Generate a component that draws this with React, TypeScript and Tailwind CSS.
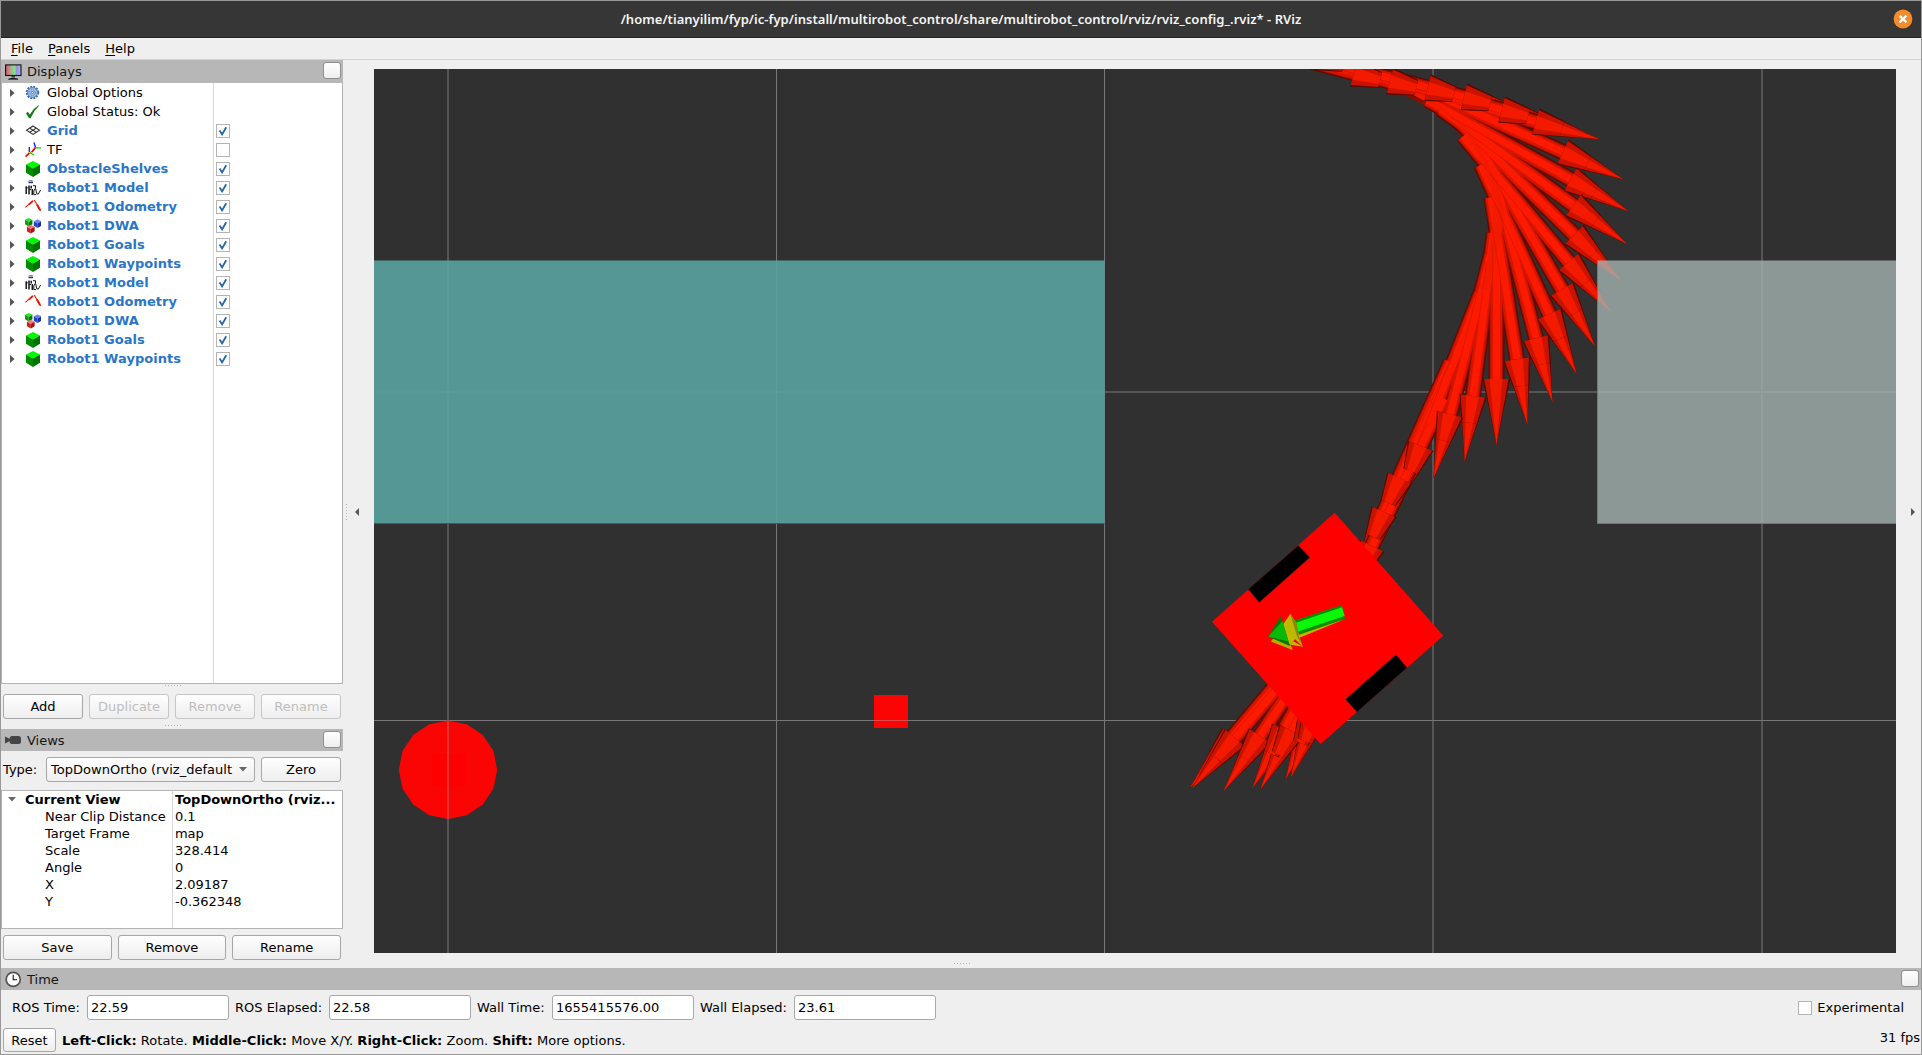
import React from "react";

type IconName = "gear" | "ok" | "grid" | "tf" | "cube" | "robot" | "odom" | "cubes";

const displays: { icon: IconName; label: string; bold?: boolean; checked?: boolean }[] = [
  { icon: "gear", label: "Global Options" },
  { icon: "ok", label: "Global Status: Ok" },
  { icon: "grid", label: "Grid", bold: true, checked: true },
  { icon: "tf", label: "TF", checked: false },
  { icon: "cube", label: "ObstacleShelves", bold: true, checked: true },
  { icon: "robot", label: "Robot1 Model", bold: true, checked: true },
  { icon: "odom", label: "Robot1 Odometry", bold: true, checked: true },
  { icon: "cubes", label: "Robot1 DWA", bold: true, checked: true },
  { icon: "cube", label: "Robot1 Goals", bold: true, checked: true },
  { icon: "cube", label: "Robot1 Waypoints", bold: true, checked: true },
  { icon: "robot", label: "Robot1 Model", bold: true, checked: true },
  { icon: "odom", label: "Robot1 Odometry", bold: true, checked: true },
  { icon: "cubes", label: "Robot1 DWA", bold: true, checked: true },
  { icon: "cube", label: "Robot1 Goals", bold: true, checked: true },
  { icon: "cube", label: "Robot1 Waypoints", bold: true, checked: true },
];

const viewProps: [string, string][] = [
  ["Near Clip Distance", "0.1"],
  ["Target Frame", "map"],
  ["Scale", "328.414"],
  ["Angle", "0"],
  ["X", "2.09187"],
  ["Y", "-0.362348"],
];

function Cube({ x, y, s, top, left, right }: { x: number; y: number; s: number; top: string; left: string; right: string }) {
  return (
    <g transform={`translate(${x} ${y}) scale(${s})`}>
      <path d="M7 0 14 3.5 7 7.5 0 3.5Z" fill={top} />
      <path d="M0 3.5 7 7.5V16L0 11.8Z" fill={left} />
      <path d="M14 3.5 7 7.5V16l7-4.2Z" fill={right} />
    </g>
  );
}

function RowIcon({ name }: { name: IconName }) {
  return (
    <svg width="16" height="16" viewBox="0 0 16 16" className="shrink-0">
      {name === "gear" && (
        <g fill="none" stroke="#3d6fb0">
          <circle cx="7.5" cy="7.5" r="5.8" strokeWidth="1.9" strokeDasharray="2 1.04" />
          <circle cx="7.5" cy="7.5" r="4.9" fill="#a9c6ea" strokeWidth="0.9" />
          <circle cx="7.5" cy="7.5" r="2.8" strokeWidth="0.9" strokeDasharray="1.4 0.8" />
          <circle cx="7.5" cy="7.5" r="1" fill="#eef4fb" strokeWidth="0.8" />
        </g>
      )}
      {name === "ok" && <path d="M1 9.2 2.8 7.8 4.8 10.4Q8 4.5 13.4 1.2L14 1.8Q8.5 7 5.6 14.2H4Z" fill="#1c7a1c" />}
      {name === "grid" && (
        <g fill="none" stroke="#333" strokeWidth="1.1">
          <path d="M8 3 14.5 7.2 8 11.4 1.5 7.2Z" />
          <path d="M4.8 5.1 11.2 9.3M11.2 5.1 4.8 9.3" />
        </g>
      )}
      {name === "tf" && (
        <g fill="none" strokeWidth="1.3">
          <path d="M10 6.5 5 11" stroke="#f08000" />
          <path d="M4.3 10V5M10.5 5.5 9 0.5" stroke="#1414f0" />
          <path d="M4.5 10.8 0.5 14.6M10.5 5.5 7 10" stroke="#f00000" strokeWidth="1.7" />
          <path d="M5 10.8 9 13M10.5 5.8H16" stroke="#00e000" />
        </g>
      )}
      {name === "cube" && <Cube x={1} y={0} s={1} top="#00fb00" left="#008a00" right="#007200" />}
      {name === "cubes" && (
        <g>
          <Cube x={0} y={0} s={0.53} top="#22e822" left="#0c9c0c" right="#087808" />
          <Cube x={8.8} y={1.4} s={0.54} top="#6a86f0" left="#2440c8" right="#16309c" />
          <Cube x={1.9} y={6.8} s={0.55} top="#f07878" left="#cc1e1e" right="#a81010" />
        </g>
      )}
      {name === "robot" && (
        <g fill="none" stroke="#161616">
          <path d="M3.5 1 4.5 0.5H7L7.8 1" strokeWidth="0.8" stroke="#666" />
          <path d="M3.5 2.4H8" stroke="#22307c" strokeWidth="1.6" />
          <path d="M1.2 6.2V14M0.5 7.8H2.6M4 5.5V14.6M6.2 5.8V8.6M7.3 9V15" strokeWidth="1.5" />
          <path d="M4 9.6H6M8 5.7H10.5V8L8.8 11V14.6H11.2M10.8 9 11.6 13.5 13.2 14.2 15.6 10" strokeWidth="1" />
        </g>
      )}
      {name === "odom" && (
        <g fill="none" stroke="#e51a00">
          <path d="M0.3 8.4 7.8 2" strokeWidth="1.1" />
          <path d="M4 5.4 8 1.8" strokeWidth="1.8" />
          <path d="M9.3 1 15.6 12" strokeWidth="1.1" />
          <path d="M12 5.6 15 11" strokeWidth="2" />
        </g>
      )}
    </svg>
  );
}

function CheckBox({ checked }: { checked?: boolean }) {
  return (
    <span className="flex h-[14px] w-[14px] shrink-0 items-center justify-center border border-[#b4b4b4] bg-white">
      {checked && (
        <svg width="10" height="10" viewBox="0 0 10 10">
          <path d="M1.6 4.6 4.1 8.4 8.2 1.2" fill="none" stroke="#2465a8" strokeWidth="1.8" />
        </svg>
      )}
    </span>
  );
}

function Button({ children, className = "", disabled }: { children: React.ReactNode; className?: string; disabled?: boolean }) {
  return (
    <div
      className={`flex h-[25px] items-center justify-center rounded-[3px] border bg-gradient-to-b from-[#fefefe] to-[#eeeeee] ${
        disabled ? "border-[#c6c6c6] text-[#bebebe]" : "border-[#a6a6a6] text-black"
      } ${className}`}
    >
      {children}
    </div>
  );
}

function PanelHeader({ icon, title, className = "", top = "mt-[2px]" }: { icon: React.ReactNode; title: string; className?: string; top?: string }) {
  return (
    <div className={`flex shrink-0 justify-between bg-[#b7b7b7] pl-[4px] pr-[2px] text-[#141414] ${className}`}>
      <div className="flex items-center gap-[5px]">
        {icon}
        <span>{title}</span>
      </div>
      <div className={`h-[17px] w-[18px] rounded-[3px] border border-[#8f8f8f] bg-gradient-to-b from-white to-[#eeeeee] ${top}`} />
    </div>
  );
}

function Dots() {
  return <div className="h-[1px] w-[17px] bg-[repeating-linear-gradient(90deg,#b4b4b4_0_1px,transparent_1px_3px)]" />;
}

/* ---------- 3D scene ---------- */

type Pose = [number, number, number];

// Head-base centre and heading in degrees; the shaft runs 164 units back from it.
const odometry: Pose[] = [
  [1318, 57, 15],
  [1354, 73, 15],
  [1390, 81, 14.5],
  [1427.7, 87.7, 14],
  [1464, 97, 14],
  [1501.7, 109.7, 14.5],
  [1535.8, 121.7, 15.4],
  [1563, 152, 24.3],
  [1570.7, 179.3, 29],
  [1573.7, 205.3, 36],
  [1574.3, 234.7, 44.5],
  [1568.8, 261.7, 50],
  [1562, 289.3, 60],
  [1549.3, 314, 65.5],
  [1536, 338.2, 75.5],
  [1517, 359.3, 81],
  [1496.5, 379, 90],
  [1473, 396, 97.3],
  [1450, 414.3, 104.4],
  [1420.7, 446, 111.4],
  [1399.7, 478.3, 115],
  [1384, 512, 114],
  [1372, 546, 116],
  [1232.5, 737, 130],
  [1235, 738, 130.5],
  [1260, 736, 123.5],
  [1284, 730, 118.5],
  [1291.5, 731, 118],
  [1311, 718, 112.5],
  [1315, 716, 111.5],
];

function place([x, y, a]: Pose) {
  return `translate(${x} ${y}) rotate(${a})`;
}

// Facets sorted from the cylinder's flank up to its crest.
const facets = [
  { y: -8, h: 16, fill: "#5c0900" },
  { y: -6.8, h: 13.8, fill: "#9a0f00" },
  { y: -5.6, h: 11.6, fill: "#d41600" },
  { y: -3.6, h: 7.6, fill: "#fd1a00" },
];

function HeadFull() {
  return (
    <g>
      <path d="M0-13.6 66 0 0 13.6Z" fill="#5a0800" />
      <path d="M0-12 66 0 0 12.4Z" fill="#c81300" />
      <path d="M0-6 66 0 0 7Z" fill="#f41a00" />
    </g>
  );
}

function HeadBase() {
  return (
    <g>
      <path d="M0-13.6 27-8V8L0 13.6Z" fill="#5a0800" />
      <path d="M0-12 27-7.1V7.3L0 12.4Z" fill="#c81300" />
      <path d="M0-6 27-3.5V4.1L0 7Z" fill="#f41a00" />
    </g>
  );
}

function Scene() {
  const circle = Array.from({ length: 16 }, (_, i) => {
    const t = (i * Math.PI) / 8;
    return `${(448 + 49.2 * Math.cos(t)).toFixed(1)},${(769.8 + 49.2 * Math.sin(t)).toFixed(1)}`;
  }).join(" ");
  return (
    <svg width="1522" height="884" viewBox="374 69 1522 884" className="block bg-[#303030]">
      <g fill="none">
        <path d="M448 69V953M1433 69V953M1762 69V953M374 392H1896" stroke="#555" strokeWidth="2" />
        <path d="M776.5 69V953M1104.5 69V953M374 720.5H1896" stroke="#777" strokeWidth="1" />
      </g>
      {odometry.map((p, i) => (
        <g key={i} transform={place(p)}><HeadFull /></g>
      ))}
      <path
        d="M1377 86 1408 97 1424 105 1433 112 1452 125 1462 137 1472 151 1480 165 1485 182 1489 197V215L1485 255 1473 290H1490L1505 215 1497 180 1470 130 1420 90 1377 75Z"
        fill="#8a0e00"
      />
      {facets.map((f) =>
        odometry.map((p, i) => (
          <rect key={f.fill + i} transform={place(p)} x="-164" y={f.y} width="165" height={f.h} fill={f.fill} />
        ))
      )}
      <path
        d="M1385 85 1411 94 1427 102 1437 109 1456 122 1466 135 1476 150 1484 164 1489 182 1493 197V215L1489 255 1480 290H1490L1505 215 1497 180 1470 130 1420 90Z"
        fill="#f41a00"
      />
      <g stroke="#b81400" strokeOpacity="0.55" strokeWidth="0.7">
        {odometry.map((p, i) => (
          <path key={i} transform={place(p)} d="M-135 3.8H0" />
        ))}
      </g>
      {odometry.map((p, i) => (
        <g key={i} transform={place(p)}><HeadBase /></g>
      ))}
      <rect x="374" y="260.5" width="730.5" height="263" fill="#5aa3a1" fillOpacity="0.9" />
      <path d="M374 523.5H1104.5" stroke="#37605f" />
      <rect x="1597.3" y="260.5" width="299" height="263" fill="#a2b3b0" fillOpacity="0.8" />
      <path d="M1597.5 260.5V523.5H1896" stroke="#6f7977" fill="none" />
      <polygon points={circle} fill="#fa0404" />
      <rect x="432" y="753" width="33" height="33" fill="#ff0000" />
      <rect x="874" y="695" width="34" height="33" fill="#fa0404" />
      <path d="M448 721V819" stroke="#df3434" strokeWidth="2" />
      <path d="M874 720.5H908" stroke="#e04a4a" />
      <path d="M1334.7 512.7 1443.3 635.7 1320.7 744 1212 621.7Z" fill="#ff0000" />
      <path d="M1298.3 545.5 1309.7 557.5 1259.3 602.3 1248.3 589.3ZM1396 654.7 1407 667.7 1357 712 1345.7 699.3Z" fill="#000" stroke="#3c1a1a" strokeWidth="0.7" />
      <path d="M1345 619 1298.3 638.3 1297 631Z" fill="#c8b400" />
      <path d="M1290.3 614 1302.7 646.7 1271.3 641.5Z" fill="#c0bc00" />
      <path d="M1271.3 641.7 1292.7 650 1291 645.5 1272 639.5Z" fill="#c0a800" />
      <path d="M1289 646 1296 638 1299 641 1302.7 646.7 1293 641Z" fill="#ff0000" />
      <path d="M1341.7 605 1345 619 1298.3 635 1294.3 620.5Z" fill="#0a8c00" />
      <path d="M1342 607.2 1344.7 616 1298 631.5 1295.3 623Z" fill="#08f808" />
      <path d="M1290.3 614 1297 624 1299 636 1302.7 646.7 1286 630Z" fill="#bcb800" />
      <path d="M1290.3 614 1297 624 1298.6 635 1302.7 646.7 1297 636Z" fill="#8a8600" />
      <path d="M1280.7 616 1290 646 1268.3 636.7Z" fill="#067806" />
      <path d="M1282.5 621 1288.5 641.5 1268.3 636.7Z" fill="#0ab80a" />
    </svg>
  );
}

function Field({ label, value, labelClass }: { label: string; value: string; labelClass: string }) {
  return (
    <div className="flex items-center">
      <span className={`shrink-0 whitespace-nowrap ${labelClass}`}>{label}</span>
      <div className="flex h-[25px] w-[142px] items-center rounded-[3px] border border-[#a8a8a8] bg-white pl-[3px]">{value}</div>
    </div>
  );
}

export default function App() {
  return (
    <div className="flex h-[1055px] w-[1922px] flex-col overflow-hidden border border-[#989898] bg-[#efefef] font-['DejaVu_Sans',sans-serif] text-[13px] leading-[17px] text-black">
      <header className="flex h-[37px] shrink-0 items-center border-b border-[#242424] bg-[#363636] pr-[8px]">
        <div className="flex-1 pl-[28px] text-center font-['Noto_Sans',sans-serif] text-[13px] font-semibold tracking-[0.035px] text-[#f4f4f4]">
          /home/tianyilim/fyp/ic-fyp/install/multirobot_control/share/multirobot_control/rviz/rviz_config_.rviz* - RViz
        </div>
        <svg width="20" height="20" viewBox="0 0 20 20">
          <circle cx="10" cy="10" r="9.4" fill="#f48b2c" />
          <path d="M6.6 6.6 13.4 13.4M13.4 6.6 6.6 13.4" stroke="#fff" strokeWidth="2.2" />
        </svg>
      </header>

      <nav className="flex h-[22px] shrink-0 items-center gap-[15px] border-b border-[#d2d2d2] pl-[10px] tracking-[0.06px]">
        {["File", "Panels", "Help"].map((m) => (
          <span key={m}>
            <span className="underline underline-offset-2">{m[0]}</span>
            {m.slice(1)}
          </span>
        ))}
      </nav>

      <div className="flex h-[907px] shrink-0">
        <aside className="flex w-[342px] shrink-0 flex-col">
          <PanelHeader
            className="h-[23px]"
            title="Displays"
            icon={
              <svg width="17" height="16" viewBox="0 0 17 16">
                <defs>
                  <linearGradient id="screen">
                    <stop offset="0" stopColor="#c06070" />
                    <stop offset="0.3" stopColor="#d09090" />
                    <stop offset="0.35" stopColor="#80c880" />
                    <stop offset="0.62" stopColor="#90e090" />
                    <stop offset="0.68" stopColor="#9090e0" />
                    <stop offset="1" stopColor="#b0b0f0" />
                  </linearGradient>
                </defs>
                <rect x="0.6" y="0.9" width="15.4" height="10.6" fill="url(#screen)" stroke="#111" strokeWidth="1.1" />
                <path d="M6.5 12H10V13.5H6.5Z" fill="#444" />
                <path d="M3.5 15.2Q8 13 13 15.2Z" fill="#222" stroke="#222" strokeWidth="0.8" />
              </svg>
            }
          />
          <div className="flex h-[601px] shrink-0 border-b border-l border-r border-[#b4b4b4] bg-white">
            <div className="w-[212px] shrink-0 border-r border-[#d8d8d8]">
              {displays.map((d, i) => (
                <div key={i} className="flex h-[19px] items-center whitespace-nowrap">
                  <svg width="5" height="8" viewBox="0 0 5 8" className="ml-[8px] mr-[10px] shrink-0">
                    <path d="M0 0 4.6 4 0 8Z" fill="#555" />
                  </svg>
                  <RowIcon name={d.icon} />
                  <span className={`ml-[6px] ${d.bold ? "font-bold tracking-[0.02px] text-[#2a76c6]" : ""}`}>{d.label}</span>
                </div>
              ))}
            </div>
            <div className="flex-1 pl-[2px]">
              {displays.map((d, i) => (
                <div key={i} className="flex h-[19px] items-center">
                  {d.checked !== undefined && <CheckBox checked={d.checked} />}
                </div>
              ))}
            </div>
          </div>
          <div className="flex h-[10px] shrink-0 justify-center pl-[2px] pt-[1px]"><Dots /></div>
          <div className="grid shrink-0 grid-cols-4 gap-[6px] pl-[2px] pr-[2px]">
            <Button>Add</Button>
            <Button disabled>Duplicate</Button>
            <Button disabled>Remove</Button>
            <Button disabled>Rename</Button>
          </div>
          <div className="flex h-[10px] shrink-0 justify-center pl-[2px] pt-[6px]"><Dots /></div>
          <PanelHeader
            className="h-[22px]"
            title="Views"
            icon={
              <svg width="17" height="10" viewBox="0 0 17 10">
                <path d="M0 1.5 5 4V6L0 8.5Z" fill="#444" />
                <rect x="4.6" y="1" width="11.4" height="8" rx="2.5" fill="#444" />
              </svg>
            }
          />
          <div className="flex shrink-0 items-center pb-[8px] pl-[2px] pr-[2px] pt-[6px]">
            <span className="w-[43px] shrink-0">Type:</span>
            <Button className="mr-[6px] w-[209px] !justify-between pl-[4px] pr-[7px]">
              <span className="whitespace-nowrap tracking-[0.02px]">TopDownOrtho (rviz_default</span>
              <svg width="8" height="5" viewBox="0 0 8 5"><path d="M0 0H8L4 4.6Z" fill="#666" /></svg>
            </Button>
            <Button className="w-[80px]">Zero</Button>
          </div>
          <div className="flex h-[139px] shrink-0 border border-[#b4b4b4] bg-white">
            <div className="w-[171px] shrink-0 border-r border-[#d8d8d8]">
              <div className="flex h-[17px] items-center font-bold">
                <svg width="8" height="5" viewBox="0 0 8 5" className="ml-[6px] mr-[9px]"><path d="M0 0H8L4 4.6Z" fill="#666" /></svg>
                Current View
              </div>
              {viewProps.map(([k]) => (
                <div key={k} className="h-[17px] whitespace-nowrap pl-[43px]">{k}</div>
              ))}
            </div>
            <div className="flex-1 pl-[2px]">
              <div className="h-[17px] whitespace-nowrap font-bold">TopDownOrtho (rviz...</div>
              {viewProps.map(([k, v]) => (
                <div key={k} className="h-[17px] tracking-[-0.04px]">{v}</div>
              ))}
            </div>
          </div>
          <div className="grid shrink-0 grid-cols-3 gap-[6px] pl-[2px] pr-[2px] pt-[6px]">
            <Button>Save</Button>
            <Button>Remove</Button>
            <Button>Rename</Button>
          </div>
        </aside>

        <main className="flex min-w-0 flex-1 flex-col">
          <div className="flex h-[893px] items-start pt-[9px]">
            <div className="flex h-[884px] w-[31px] items-center pl-[3px] pt-[2px]">
              <div className="h-[17px] w-[1px] bg-[repeating-linear-gradient(180deg,#b4b4b4_0_1px,transparent_1px_3px)]" />
              <svg width="4" height="8" viewBox="0 0 4 8" className="ml-[8px]"><path d="M4 0V8L0 4Z" fill="#555" /></svg>
            </div>
            <Scene />
            <div className="flex h-[884px] flex-1 items-center pl-[15px] pt-[2px]">
              <svg width="4" height="8" viewBox="0 0 4 8"><path d="M0 0V8L4 4Z" fill="#555" /></svg>
            </div>
          </div>
        </main>
      </div>

      <div className="-mt-[4px] flex h-[5px] shrink-0 justify-center pl-[2px]"><Dots /></div>
      <PanelHeader
        className="h-[22px]"
        title="Time"
        icon={
          <svg width="17" height="17" viewBox="0 0 17 17">
            <circle cx="8.2" cy="8.4" r="7" fill="#fff" stroke="#555" strokeWidth="1.7" />
            <path d="M8.2 3.8V8.8H12" fill="none" stroke="#111" strokeWidth="1.1" />
          </svg>
        }
      />
      <div className="flex h-[36px] shrink-0 items-center pb-[1px] pl-[11px] pr-[17px]">
        <Field label="ROS Time:" value="22.59" labelClass="w-[75px]" />
        <Field label="ROS Elapsed:" value="22.58" labelClass="ml-[6px] w-[94px]" />
        <Field label="Wall Time:" value="1655415576.00" labelClass="ml-[6px] w-[75px]" />
        <Field label="Wall Elapsed:" value="23.61" labelClass="ml-[6px] w-[94px]" />
        <div className="ml-auto flex items-center gap-[5px]">
          <CheckBox />
          <span>Experimental</span>
        </div>
      </div>
      <div className="flex flex-1 items-center pl-[2px] pr-px">
        <Button className="!h-[24px] w-[53px]">Reset</Button>
        <div className="ml-[6px] whitespace-nowrap tracking-[0.03px]">
          <b>Left-Click:</b> Rotate. <b>Middle-Click:</b> Move X/Y. <b>Right-Click:</b> Zoom. <b>Shift:</b> More options.
        </div>
        <div className="mb-[6px] ml-auto">31 fps</div>
      </div>
    </div>
  );
}
